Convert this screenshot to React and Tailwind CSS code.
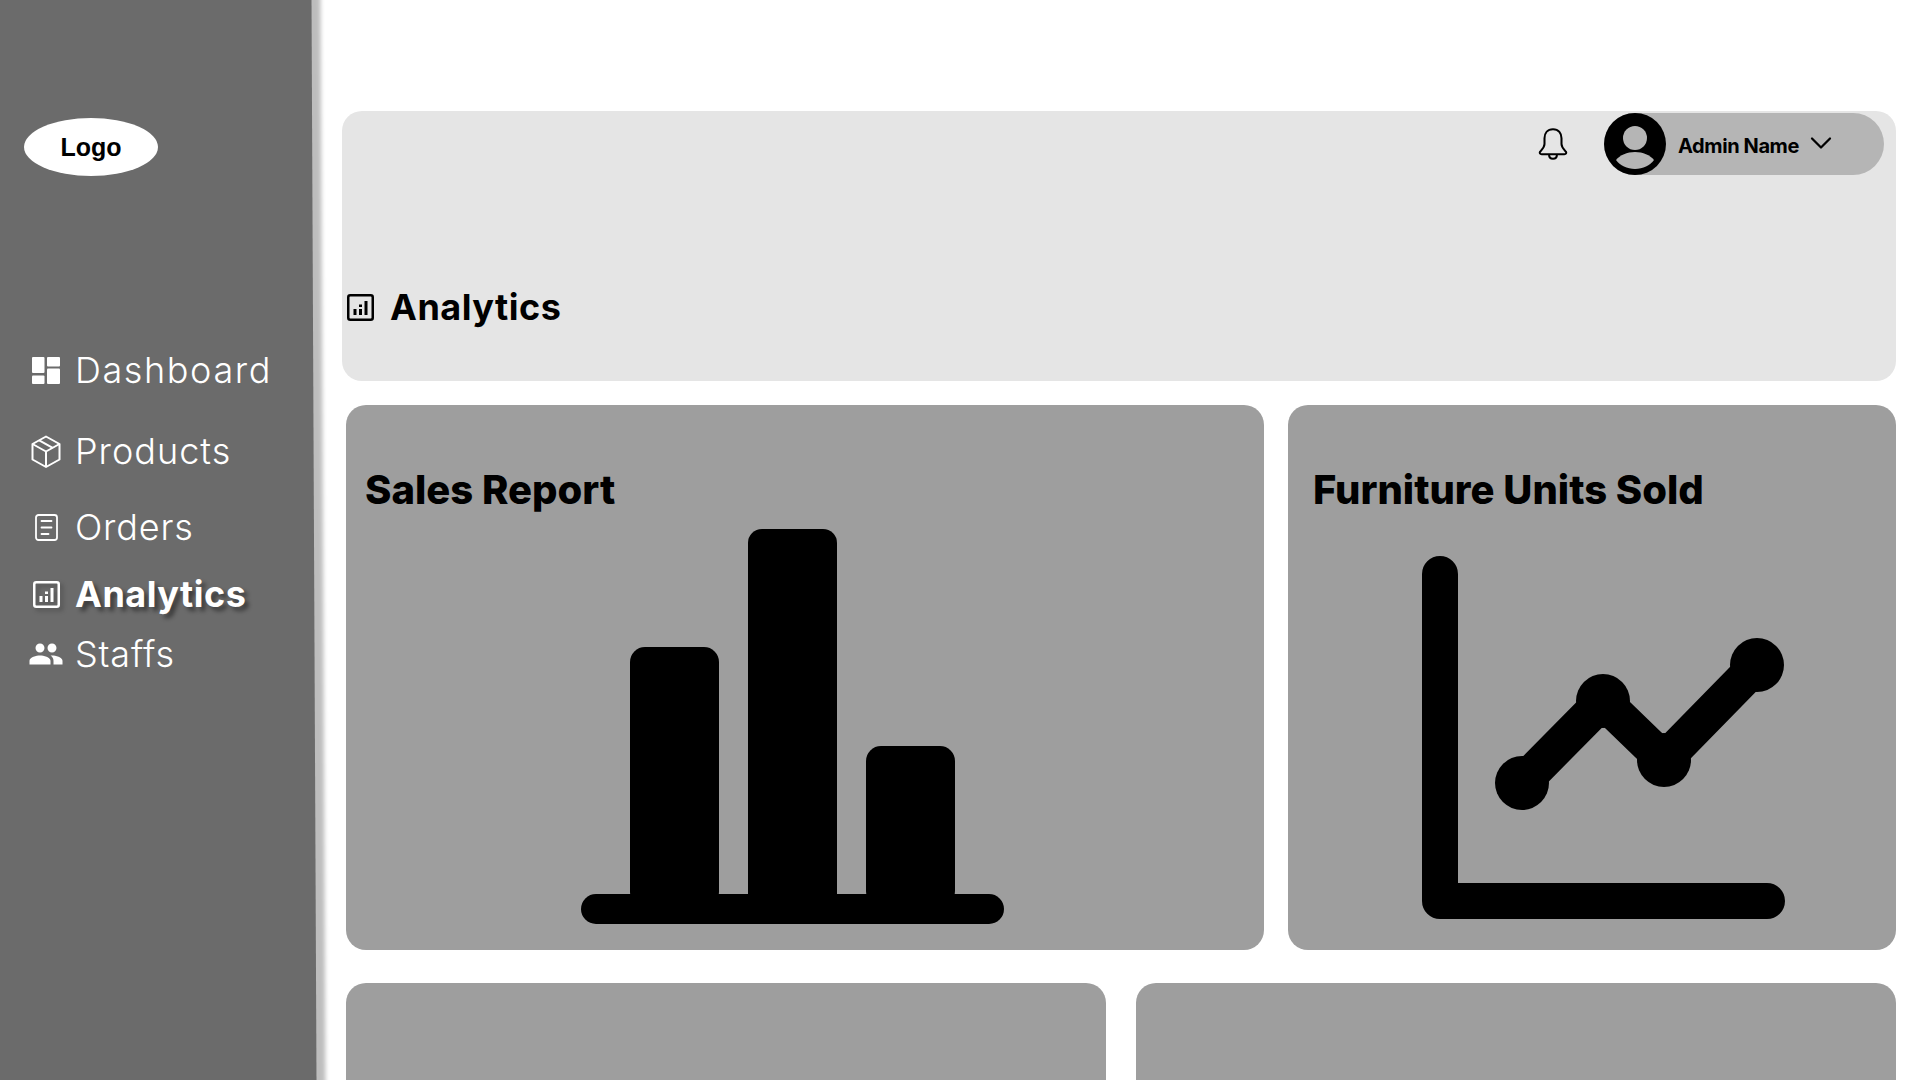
import React from "react";
import { ChevronDown } from "lucide-react";

function DashboardIcon() {
  return (
    <svg width="28" height="27" viewBox="0 0 28 27" fill="white">
      <rect x="0" y="0" width="12.5" height="16" rx="1" />
      <rect x="15" y="0" width="13" height="9.5" rx="1" />
      <rect x="0" y="18.5" width="12.5" height="8.5" rx="1" />
      <rect x="15" y="11.5" width="13" height="15.5" rx="1" />
    </svg>
  );
}

function ProductsIcon() {
  return (
    <svg width="30" height="33" viewBox="0 0 30 33" fill="none" stroke="white" strokeWidth="2" strokeLinejoin="round">
      <path d="M15 1.5L28.5 9V24.5L15 32L1.5 24.5V9Z" />
      <path d="M1.5 9L15 16.5L28.5 9M15 16.5V32" />
      <path d="M8.2 5.3L21.7 12.8" />
    </svg>
  );
}

function OrdersIcon() {
  return (
    <svg width="23" height="27" viewBox="0 0 23 27" fill="none" stroke="white" strokeWidth="1.8" strokeLinecap="round">
      <rect x="1" y="1" width="21" height="25" rx="2.5" />
      <path d="M6.5 7H16.5M6.5 13.5H16.5M6.5 20H13.5" />
    </svg>
  );
}

function AnalyticsIcon({ color = "white", className = "" }) {
  return (
    <svg width="27" height="27" viewBox="0 0 27 27" fill="none" className={className}>
      <rect x="1.25" y="1.25" width="24.5" height="24.5" rx="2" stroke={color} strokeWidth="2.5" />
      <rect x="6.5" y="15" width="3" height="6" fill={color} />
      <rect x="12" y="10.5" width="3" height="2.5" fill={color} />
      <rect x="12" y="15" width="3" height="6" fill={color} />
      <rect x="17.5" y="7" width="3" height="14" fill={color} />
    </svg>
  );
}

function StaffsIcon() {
  return (
    <svg width="40" height="40" viewBox="0 0 24 24" fill="white">
      <path d="M16 11c1.66 0 2.99-1.34 2.99-3S17.66 5 16 5c-1.66 0-3 1.34-3 3s1.34 3 3 3zm-8 0c1.66 0 2.99-1.34 2.99-3S9.66 5 8 5C6.34 5 5 6.34 5 8s1.34 3 3 3zm0 2c-2.33 0-7 1.17-7 3.5V19h14v-2.5c0-2.33-4.67-3.5-7-3.5zm8 0c-.29 0-.62.02-.97.05 1.16.84 1.97 1.97 1.97 3.45V19h6v-2.5c0-2.33-4.67-3.5-7-3.5z" />
    </svg>
  );
}

const navItems = [
  { label: "Dashboard", icon: <DashboardIcon />, margin: "mt-[167px]", spacing: "tracking-[1.6px]" },
  { label: "Products", icon: <ProductsIcon />, margin: "mt-[27px]", spacing: "tracking-[1px]" },
  { label: "Orders", icon: <OrdersIcon />, margin: "mt-[22px]", spacing: "tracking-[0.8px]" },
  {
    label: "Analytics",
    icon: <AnalyticsIcon className="drop-shadow-[3px_3px_2px_rgba(0,0,0,0.25)]" />,
    margin: "mt-[13px]",
    spacing: "tracking-[0.5px]",
    active: true,
  },
  { label: "Staffs", icon: <StaffsIcon />, margin: "mt-[6px]", spacing: "tracking-[0.8px]" },
];

function Sidebar() {
  return (
    <aside className="relative w-[315px] shrink-0 h-full">
      {/* the panel leans a little in the design, so only its background is turned */}
      <div className="absolute -top-4 -bottom-4 -left-4 right-[1px] rotate-[-0.265deg] bg-[#6b6b6b] shadow-[9px_0_4px_rgba(0,0,0,0.26)]"></div>
      <div className="relative pt-[118px]">
        <div className="ml-[24px] w-[134px] h-[58px] pt-[1px] rounded-[50%] bg-white flex items-center justify-center font-['Liberation_Sans',sans-serif] font-bold text-[25px] text-black">
          Logo
        </div>
        <nav>
          {navItems.map((item) => (
            <div key={item.label} className={`${item.margin} h-[54px] pl-[28px] flex items-center gap-[11px]`}>
              <div className="w-[36px] flex justify-center">{item.icon}</div>
              <span
                className={`text-[36px] text-white ${item.spacing} ${
                  item.active ? "font-bold [text-shadow:4px_4px_4px_rgba(0,0,0,0.45)]" : "font-light"
                }`}
              >
                {item.label}
              </span>
            </div>
          ))}
        </nav>
      </div>
    </aside>
  );
}

function Header() {
  return (
    <div className="h-[270px] rounded-[20px] bg-[#e5e5e5] flex flex-col">
      <div className="pt-[2px] pr-[12px] flex justify-end items-center">
        <svg width="32" height="34" viewBox="0 0 28 30" fill="none" stroke="black" strokeWidth="1.8" strokeLinejoin="round" className="mr-[35px]">
          <path d="M14 2C9 2 6.5 5.5 6.5 10V15C6.5 18 4 20 2.5 22C2 23 2.5 24 4 24H24C25.5 24 26 23 25.5 22C24 20 21.5 18 21.5 15V10C21.5 5.5 19 2 14 2Z" />
          <path d="M10.5 24C10.5 26.5 12 28 14 28C16 28 17.5 26.5 17.5 24" />
        </svg>
        <div className="w-[280px] h-[62px] rounded-full bg-[#b5b5b5] flex items-center">
          <svg width="62" height="62" viewBox="0 0 62 62">
            <circle cx="31" cy="31" r="31" fill="black" />
            <circle cx="31" cy="25" r="12" fill="#b5b5b5" />
            <path d="M12 47C16 42 23 39 31 39C39 39 46 42 50 47C46 52.500 39 56 31 56C23 56 16 52.500 12 47Z" fill="#b5b5b5" />
          </svg>
          <span className="ml-[12px] mt-[3px] text-[20px] font-bold text-black tracking-[-0.4px]">Admin Name</span>
          <ChevronDown size={36} strokeWidth={1.5} className="ml-[4px] mt-[-3px] text-black" />
        </div>
      </div>
      <div className="mt-[105px] pl-[5px] flex items-center gap-[16px]">
        <AnalyticsIcon color="black" />
        <h1 className="text-[36px] font-bold text-black tracking-[0.5px]">Analytics</h1>
      </div>
    </div>
  );
}

function SalesChart() {
  return (
    <svg width="423" height="395" viewBox="0 0 423 395" className="mt-[9px] ml-[235px]">
      <rect x="49" y="118" width="89" height="260" rx="15" />
      <rect x="167" y="0" width="89" height="380" rx="14" />
      <rect x="285" y="217" width="89" height="160" rx="15" />
      <rect x="0" y="365" width="423" height="30" rx="15" />
    </svg>
  );
}

function UnitsChart() {
  return (
    <svg width="363" height="363" viewBox="0 0 363 363" fill="none" stroke="black" strokeWidth="36" strokeLinecap="round" strokeLinejoin="round" className="mt-[36px] ml-[134px]">
      <path d="M18 18V345H345" />
      <path d="M100 227L181 145L242 204L335 109" />
      <g fill="black" stroke="none">
        <circle cx="100" cy="227" r="27" />
        <circle cx="181" cy="145" r="27" />
        <circle cx="242" cy="204" r="27" />
        <circle cx="335" cy="109" r="27" />
      </g>
    </svg>
  );
}

export default function App() {
  return (
    <div className="w-[1920px] h-screen overflow-hidden flex bg-white font-['Inter',sans-serif]">
      <Sidebar />
      <main className="flex-1 min-w-0 pt-[111px] pl-[27px] pr-[24px]">
        <Header />
        <div className="ml-[4px] mt-[24px] h-[545px] flex gap-[24px]">
          <section className="w-[918px] rounded-[20px] bg-[#9e9e9e] pt-[55px]">
            <h2 className="pl-[19px] h-[60px] leading-[60px] text-[40px] font-extrabold text-black">Sales Report</h2>
            <SalesChart />
          </section>
          <section className="flex-1 rounded-[20px] bg-[#9e9e9e] pt-[55px]">
            <h2 className="pl-[25px] h-[60px] leading-[60px] text-[40px] font-extrabold text-black">Furniture Units Sold</h2>
            <UnitsChart />
          </section>
        </div>
        <div className="ml-[4px] mt-[33px] h-[300px] grid grid-cols-2 gap-[30px]">
          <section className="rounded-[20px] bg-[#9e9e9e]"></section>
          <section className="rounded-[20px] bg-[#9e9e9e]"></section>
        </div>
      </main>
    </div>
  );
}
